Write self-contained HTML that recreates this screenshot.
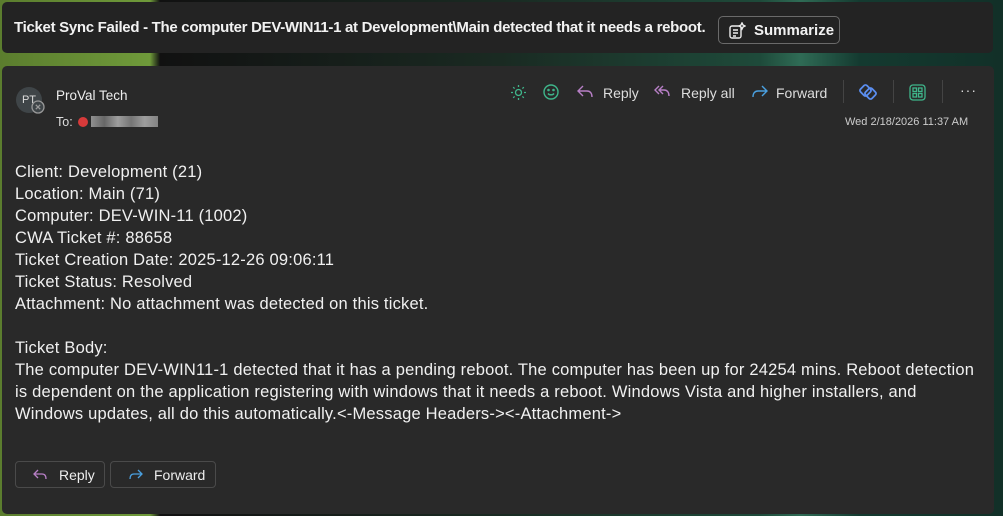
<!DOCTYPE html>
<html><head><meta charset="utf-8"><style>
*{margin:0;padding:0;box-sizing:border-box}
body{width:1003px;height:516px;overflow:hidden;font-family:"Liberation Sans",sans-serif;color:#e8e8e8;position:relative;
background:linear-gradient(90deg,#5b7d2e 0,#6f9a3a 150px,#111 160px,#1a2a22 500px,#1e4a3a 760px,#2f6b55 800px,#143a30 860px,#123028 1003px);}
.top{position:absolute;left:2px;top:2px;width:991px;height:51px;background:#232323;border-radius:5px}
.subj{position:absolute;left:14px;top:17px;font-size:15px;font-weight:bold;color:#f2f2f2;white-space:nowrap;letter-spacing:-0.3px}
.sum{position:absolute;left:718px;top:16px;width:122px;height:28px;border:1px solid #6a6a6a;border-radius:5px;font-size:15px;font-weight:bold;color:#f2f2f2}
.card{position:absolute;left:2px;top:66px;width:992px;height:448px;background:#292929;border-radius:5px}
.av{position:absolute;left:16px;top:87px;width:26px;height:26px;border-radius:50%;background:#3f4548;font-size:11px;color:#ddd;text-align:center;line-height:26px}
.t{position:absolute;white-space:nowrap}
.body{position:absolute;left:15px;top:161px;font-size:16.5px;line-height:22px;color:#f0f0f0;white-space:nowrap;letter-spacing:0.2px}
.btn{position:absolute;top:461px;height:27px;border:1px solid #4a4a4a;border-radius:4px;font-size:14px;color:#eee}
.tb{position:absolute;top:85px;font-size:14px;color:#ddd}
.sep{position:absolute;top:80px;width:1px;height:23px;background:#444}
</style></head><body>
<div class="top">
<div class="subj" style="left:12px">Ticket Sync Failed - The computer DEV-WIN11-1 at Development\Main detected that it needs a reboot.</div>
</div>
<div class="sum"><svg style="position:absolute;left:9px;top:5px" width="18" height="18" viewBox="0 0 18 18" fill="none" stroke="#eee" stroke-width="1.4"><rect x="2" y="4" width="11" height="12" rx="2"/><path d="M5 8h5M5 11h5M5 14h3M14 1l1 2 2 1-2 1-1 2-1-2-2-1 2-1z"/></svg><span style="position:absolute;left:35px;top:5px">Summarize</span></div>
<div class="card"></div>
<div class="av">PT</div>
<svg style="position:absolute;left:31px;top:100px" width="14" height="14" viewBox="0 0 14 14"><circle cx="7" cy="7" r="6" fill="#3f4548" stroke="#999" stroke-width="1.3"/><path d="M4.8 4.8l4.4 4.4M9.2 4.8l-4.4 4.4" stroke="#999" stroke-width="1.3"/></svg>
<div class="t" style="left:56px;top:88px;font-size:13.5px;color:#eee">ProVal Tech</div>
<div class="t" style="left:56px;top:115px;font-size:12.5px;color:#ddd">To:</div>
<div style="position:absolute;left:78px;top:117px;width:10px;height:10px;border-radius:50%;background:#d73a3a"></div>
<div style="position:absolute;left:91px;top:116px;width:67px;height:11px;background:linear-gradient(90deg,#aaa,#777 20%,#bbb 40%,#888 60%,#bbb 80%,#999);opacity:.8"></div>
<svg style="position:absolute;left:510px;top:84px" width="17" height="17" viewBox="0 0 17 17" fill="none" stroke="#3fb68b" stroke-width="1.3"><circle cx="8.5" cy="8.5" r="3"/><path d="M8.5 1v2M8.5 14v2M1 8.5h2M14 8.5h2M3.2 3.2l1.4 1.4M12.4 12.4l1.4 1.4M3.2 13.8l1.4-1.4M12.4 4.6l1.4-1.4"/></svg>
<svg style="position:absolute;left:542px;top:83px" width="18" height="18" viewBox="0 0 18 18" fill="none" stroke="#3fb68b" stroke-width="1.4"><circle cx="9" cy="9" r="7"/><path d="M6 10.5c1.5 1.8 4.5 1.8 6 0"/><circle cx="6.5" cy="7" r=".6"/><circle cx="11.5" cy="7" r=".6"/></svg>
<svg style="position:absolute;left:577px;top:85px" width="17" height="14" viewBox="0 0 17 14" fill="none" stroke="#b77fc6" stroke-width="1.4"><path d="M6 1L1 6l5 5M1 6h9c3 0 5 2 5 6"/></svg>
<div class="tb" style="left:603px">Reply</div>
<svg style="position:absolute;left:654px;top:85px" width="17" height="14" viewBox="0 0 17 14" fill="none" stroke="#b77fc6" stroke-width="1.4"><path d="M5 1L1 5l4 4M9 1L5 5l4 4M5 5h5c3 0 5 2 5 6"/></svg>
<div class="tb" style="left:681px">Reply all</div>
<svg style="position:absolute;left:751px;top:85px" width="17" height="14" viewBox="0 0 17 14" fill="none" stroke="#4aa0e0" stroke-width="1.4"><path d="M11 1l5 5-5 5M16 6H7c-3 0-5 2-5 6"/></svg>
<div class="tb" style="left:776px">Forward</div>
<div class="sep" style="left:843px"></div>
<svg style="position:absolute;left:858px;top:82px" width="20" height="20" viewBox="0 0 20 20" fill="none" stroke="#5b8ef0" stroke-width="1.8"><rect x="3" y="4" width="9" height="9" rx="2" transform="rotate(45 7.5 8.5)"/><rect x="8" y="7" width="9" height="9" rx="2" transform="rotate(45 12.5 11.5)"/></svg>
<div class="sep" style="left:893px"></div>
<svg style="position:absolute;left:909px;top:84px" width="17" height="17" viewBox="0 0 17 17" fill="none" stroke="#3fb68b" stroke-width="1.3"><rect x="1" y="1" width="15" height="15" rx="3"/><rect x="4" y="4" width="3.5" height="3.5"/><rect x="9.5" y="4" width="3.5" height="3.5"/><rect x="4" y="9.5" width="3.5" height="3.5"/><rect x="9.5" y="9.5" width="3.5" height="3.5"/></svg>
<div class="sep" style="left:942px"></div>
<div class="t" style="left:960px;top:82px;font-size:14px;color:#ddd;letter-spacing:1px">···</div>
<div class="t" style="left:845px;top:116px;font-size:11px;color:#ccc">Wed 2/18/2026 11:37 AM</div>
<div class="body">Client: Development (21)<br>Location: Main (71)<br>Computer: DEV-WIN-11 (1002)<br>CWA Ticket #: 88658<br>Ticket Creation Date: 2025-12-26 09:06:11<br>Ticket Status: Resolved<br>Attachment: No attachment was detected on this ticket.<br><br>Ticket Body:<br>The computer DEV-WIN11-1 detected that it has a pending reboot. The computer has been up for 24254 mins. Reboot detection<br>is dependent on the application registering with windows that it needs a reboot. Windows Vista and higher installers, and<br>Windows updates, all do this automatically.&lt;-Message Headers-&gt;&lt;-Attachment-&gt;</div>
<div class="btn" style="left:15px;width:90px"><svg style="position:absolute;left:17px;top:7px" width="15" height="12" viewBox="0 0 15 12" fill="none" stroke="#b77fc6" stroke-width="1.3"><path d="M5 1L1 5l4 4M1 5h8c3 0 4 2 4 5"/></svg><span style="position:absolute;left:43px;top:5px">Reply</span></div>
<div class="btn" style="left:110px;width:106px"><svg style="position:absolute;left:17px;top:7px" width="15" height="12" viewBox="0 0 15 12" fill="none" stroke="#4aa0e0" stroke-width="1.3"><path d="M10 1l4 4-4 4M14 5H6c-3 0-4 2-4 5"/></svg><span style="position:absolute;left:43px;top:5px">Forward</span></div>
</body></html>
